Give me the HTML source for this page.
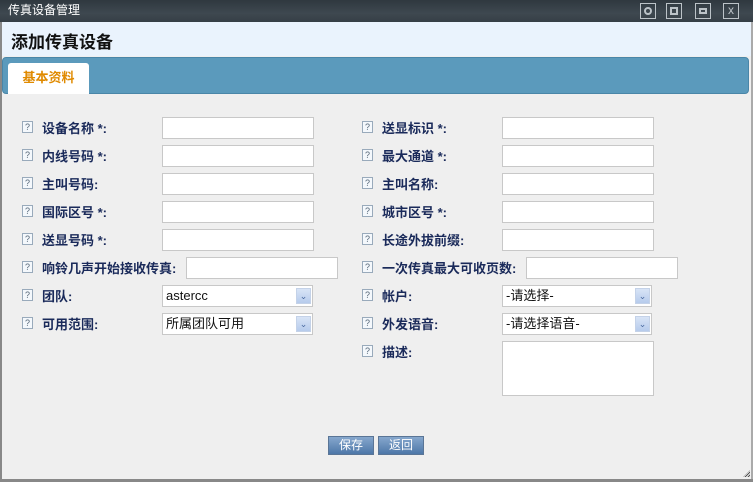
<!DOCTYPE html>
<html><head><meta charset="utf-8"><style>
*{margin:0;padding:0;box-sizing:border-box}
body{width:753px;height:482px;overflow:hidden;background:#efefef;font-family:"Liberation Sans","Noto Sans CJK SC",sans-serif;position:relative}
.tb{position:absolute;left:0;top:0;width:753px;height:22px;background:linear-gradient(#2f383f,#3e4850 60%,#363f46);color:#fff;font-size:12px;line-height:20px;padding-left:8px}
.ic{position:absolute;top:3px;width:16px;height:16px;border:1px solid #bcc3c8}
.hd{position:absolute;left:1px;top:22px;width:750px;height:34px;background:#eaf3fd;font-size:17px;font-weight:bold;color:#111;padding:6px 0 0 10px}
.tabbar{position:absolute;left:2px;top:57px;width:747px;height:37px;background:#5b9abc;border:1px solid #4a86a8;border-radius:4px}
.tab{position:absolute;left:8px;top:63px;width:81px;height:31px;background:#fff;border-radius:3px 3px 0 0;color:#e08a00;font-weight:bold;font-size:13px;text-align:center;line-height:30px}
.lb{position:absolute;border-left:2px solid #888;left:0;top:22px;height:460px}
.rb{position:absolute;right:0;top:22px;width:2px;height:460px;background:#aaa}
.bb{position:absolute;left:0;bottom:0;width:753px;height:3px;background:#888}
.q{position:absolute;width:11px;height:12px;border:1px solid #9ab;background:#f4f8fc;font-size:9px;color:#567;text-align:center;line-height:10px}
.l{position:absolute;font-size:13px;font-weight:bold;color:#1a2a5a;white-space:nowrap;margin-top:-2px}
.in{position:absolute;width:152px;height:22px;background:#fff;border:1px solid #c8c8c8}
.sel{position:absolute;height:22px;background:#fff;border:1px solid #c8c8c8;font-size:13px;color:#111;padding:2px 3px;line-height:16px}
.sel i{position:absolute;right:1px;top:2px;width:15px;height:16px;background:linear-gradient(#d8e4f6,#b6cbec);border:1px solid #c4d2e8;font-style:normal;font-size:9px;color:#4a6aa0;text-align:center;line-height:15px}
.btn{position:absolute;top:436px;width:46px;height:19px;background:linear-gradient(#86a7cd,#4d77a8);border:1px solid #5a7596;color:#fff;font-size:12px;text-align:center;line-height:17px}
</style></head><body>
<div class="tb">传真设备管理</div>
<div class="ic" style="left:640px"><div style="position:absolute;left:3px;top:3px;width:8px;height:8px;border:2px solid #bcc3c8;border-radius:50%"></div></div>
<div class="ic" style="left:666px"><div style="position:absolute;left:3px;top:3px;width:8px;height:8px;border:2px solid #bcc3c8"></div></div>
<div class="ic" style="left:695px"><div style="position:absolute;left:3px;top:4px;width:8px;height:6px;border:2px solid #bcc3c8"></div></div>
<div class="ic" style="left:723px;color:#bcc3c8;font-size:12px;text-align:center;line-height:13px">x</div>
<div class="hd">添加传真设备</div>
<div class="tabbar"></div>
<div class="tab">基本资料</div>
<div class="lb"></div><div class="rb"></div><div class="bb"></div>

<div class="q" style="left:22px;top:121px">?</div><div class="l" style="left:42px;top:120px">设备名称 *:</div><div class="in" style="left:162px;top:117px"></div>
<div class="q" style="left:22px;top:149px">?</div><div class="l" style="left:42px;top:148px">内线号码 *:</div><div class="in" style="left:162px;top:145px"></div>
<div class="q" style="left:22px;top:177px">?</div><div class="l" style="left:42px;top:176px">主叫号码:</div><div class="in" style="left:162px;top:173px"></div>
<div class="q" style="left:22px;top:205px">?</div><div class="l" style="left:42px;top:204px">国际区号 *:</div><div class="in" style="left:162px;top:201px"></div>
<div class="q" style="left:22px;top:233px">?</div><div class="l" style="left:42px;top:232px">送显号码 *:</div><div class="in" style="left:162px;top:229px"></div>
<div class="q" style="left:22px;top:261px">?</div><div class="l" style="left:42px;top:260px">响铃几声开始接收传真:</div><div class="in" style="left:186px;top:257px"></div>
<div class="q" style="left:22px;top:289px">?</div><div class="l" style="left:42px;top:288px">团队:</div><div class="sel" style="left:162px;top:285px;width:151px">astercc<i>&#8964;</i></div>
<div class="q" style="left:22px;top:317px">?</div><div class="l" style="left:42px;top:316px">可用范围:</div><div class="sel" style="left:162px;top:313px;width:151px">所属团队可用<i>&#8964;</i></div>

<div class="q" style="left:362px;top:121px">?</div><div class="l" style="left:382px;top:120px">送显标识 *:</div><div class="in" style="left:502px;top:117px"></div>
<div class="q" style="left:362px;top:149px">?</div><div class="l" style="left:382px;top:148px">最大通道 *:</div><div class="in" style="left:502px;top:145px"></div>
<div class="q" style="left:362px;top:177px">?</div><div class="l" style="left:382px;top:176px">主叫名称:</div><div class="in" style="left:502px;top:173px"></div>
<div class="q" style="left:362px;top:205px">?</div><div class="l" style="left:382px;top:204px">城市区号 *:</div><div class="in" style="left:502px;top:201px"></div>
<div class="q" style="left:362px;top:233px">?</div><div class="l" style="left:382px;top:232px">长途外拔前缀:</div><div class="in" style="left:502px;top:229px"></div>
<div class="q" style="left:362px;top:261px">?</div><div class="l" style="left:382px;top:260px">一次传真最大可收页数:</div><div class="in" style="left:526px;top:257px"></div>
<div class="q" style="left:362px;top:289px">?</div><div class="l" style="left:382px;top:288px">帐户:</div><div class="sel" style="left:502px;top:285px;width:150px">-请选择-<i>&#8964;</i></div>
<div class="q" style="left:362px;top:317px">?</div><div class="l" style="left:382px;top:316px">外发语音:</div><div class="sel" style="left:502px;top:313px;width:150px">-请选择语音-<i>&#8964;</i></div>
<div class="q" style="left:362px;top:345px">?</div><div class="l" style="left:382px;top:344px">描述:</div><div class="in" style="left:502px;top:341px;height:55px"></div>

<div class="btn" style="left:328px">保存</div>
<div class="btn" style="left:378px">返回</div>
<div style="position:absolute;right:3px;bottom:5px;width:7px;height:7px;background:repeating-linear-gradient(135deg,#555 0 1px,transparent 1px 2px);clip-path:polygon(100% 0,100% 100%,0 100%)"></div>
</body></html>
